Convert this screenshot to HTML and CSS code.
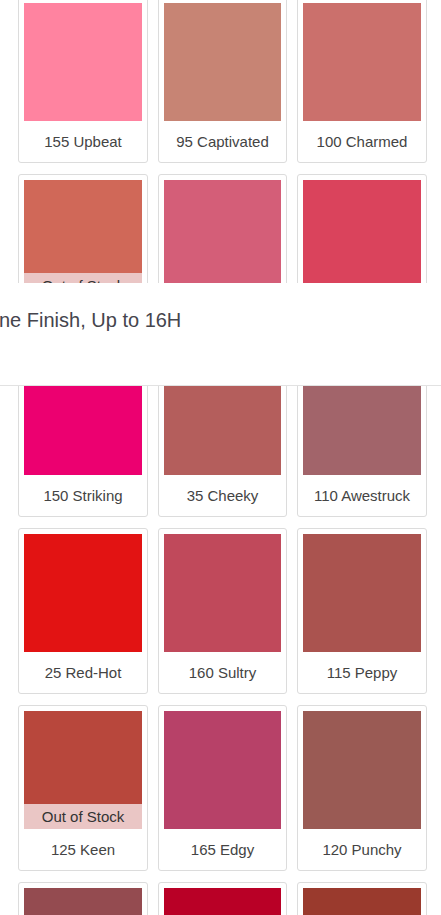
FILE: index.html
```html
<!DOCTYPE html>
<html lang="en">
<head>
<meta charset="utf-8">
<title>Shades</title>
<link rel="stylesheet" href="styles.css">
</head>
<body>
<div class="shade-grid">
  <div class="card"><div class="swatch" style="background:#ff83a0"></div><div class="label">155 Upbeat</div></div>
  <div class="card"><div class="swatch" style="background:#c78474"></div><div class="label">95 Captivated</div></div>
  <div class="card"><div class="swatch" style="background:#cb706c"></div><div class="label">100 Charmed</div></div>

  <div class="card"><div class="swatch" style="background:#d06858"><div class="oos">Out of Stock</div></div><div class="label">130 Fiery</div></div>
  <div class="card"><div class="swatch" style="background:#d45e78"></div><div class="label">20 Coy</div></div>
  <div class="card"><div class="swatch" style="background:#da435c"></div><div class="label">45 Capricious</div></div>

  <div class="card"><div class="swatch" style="background:#ec0070"></div><div class="label">150 Striking</div></div>
  <div class="card"><div class="swatch" style="background:#b45e5c"></div><div class="label">35 Cheeky</div></div>
  <div class="card"><div class="swatch" style="background:#a2646a"></div><div class="label">110 Awestruck</div></div>

  <div class="card"><div class="swatch" style="background:#e21313"></div><div class="label">25 Red-Hot</div></div>
  <div class="card"><div class="swatch" style="background:#c0495b"></div><div class="label">160 Sultry</div></div>
  <div class="card"><div class="swatch" style="background:#aa534f"></div><div class="label">115 Peppy</div></div>

  <div class="card"><div class="swatch" style="background:#b8473c"><div class="oos">Out of Stock</div></div><div class="label">125 Keen</div></div>
  <div class="card"><div class="swatch" style="background:#b74168"></div><div class="label">165 Edgy</div></div>
  <div class="card"><div class="swatch" style="background:#9a5a54"></div><div class="label">120 Punchy</div></div>

  <div class="card"><div class="swatch" style="background:#944b50"></div><div class="label">30 Unrivaled</div></div>
  <div class="card"><div class="swatch" style="background:#b90026"></div><div class="label">50 Wicked</div></div>
  <div class="card"><div class="swatch" style="background:#9a3a2d"></div><div class="label">55 Royal</div></div>
</div>

<div class="sticky-title">
  <div class="title-text">ne Finish, Up to 16H</div>
</div>
</body>
</html>
```

FILE: styles.css
```css
html, body {
  margin: 0;
  padding: 0;
  background: #ffffff;
  font-family: "Liberation Sans", Arial, sans-serif;
}

.shade-grid {
  display: grid;
  grid-template-columns: 130px 129px 130px;
  column-gap: 10px;
  row-gap: 11px;
  margin-top: -3px;
  padding-left: 18px;
}

.card {
  border: 1px solid #dcdcdc;
  border-radius: 3px;
  padding: 5px 5px 10px;
  background: #fff;
}

.swatch {
  height: 118px;
  position: relative;
}

.oos {
  position: absolute;
  left: 0;
  right: 0;
  bottom: 0;
  height: 25px;
  line-height: 25px;
  background: #eac6c5;
  color: #333;
  font-size: 15px;
  text-align: center;
}

.label {
  margin-top: 11px;
  height: 20px;
  line-height: 20px;
  font-size: 15px;
  color: #444;
  text-align: center;
  white-space: nowrap;
}

.sticky-title {
  position: fixed;
  top: 283px;
  left: 0;
  right: 0;
  height: 102px;
  background: #fff;
  border-bottom: 1px solid #e2e2e2;
  z-index: 10;
  overflow: hidden;
}

.title-text {
  padding-top: 25px;
  margin-left: -1px;
  font-size: 20px;
  line-height: 24px;
  color: #45454d;
  white-space: nowrap;
}
```
